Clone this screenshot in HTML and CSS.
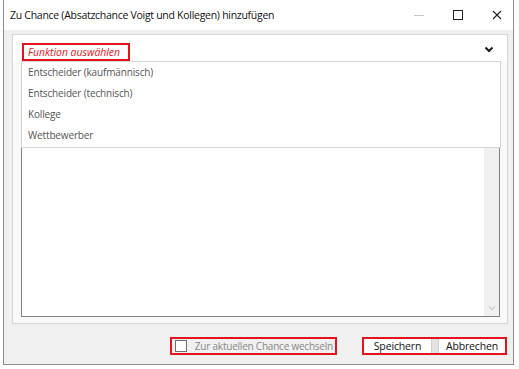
FILE: index.html
```html
<!DOCTYPE html>
<html lang="de">

    <head>
        <meta charset="UTF-8">
        <meta name="viewport" content="width=device-width, initial-scale=1.0">
        <title>Zu Chance hinzufügen</title>
        <link rel="stylesheet" href="styles.css">
    </head>

    <body>
        <div class="window">
            <div class="titlebar">
                <span class="title">Zu Chance (Absatzchance Voigt und Kollegen) hinzufügen</span>
                <div class="win-controls">
                    <span class="ctrl ctrl-min">
                        <svg width="10" height="10" viewBox="0 0 10 10"><path d="M0 5.5h10" stroke="#c4c4c4" stroke-width="1"/></svg>
                    </span>
                    <span class="ctrl">
                        <svg width="10" height="10" viewBox="0 0 10 10"><rect x="0.5" y="0.5" width="9" height="9" fill="none" stroke="#222" stroke-width="1"/></svg>
                    </span>
                    <span class="ctrl">
                        <svg width="10" height="10" viewBox="0 0 10 10"><path d="M1 1l8 8M9 1l-8 8" stroke="#222" stroke-width="1.1"/></svg>
                    </span>
                </div>
            </div>

            <div class="content">
                <div class="panel">
                    <div class="combo">
                        <span class="placeholder mark">Funktion auswählen</span>
                        <svg class="chevron" width="10" height="7" viewBox="0 0 10 7"><path d="M1.5 1.5l3.5 3.5 3.5-3.5" fill="none" stroke="#1a1a1a" stroke-width="2"/></svg>
                    </div>

                    <div class="editor">
                        <div class="scrollbar">
                            <svg width="8" height="6" viewBox="0 0 8 6"><path d="M1 1.5l3 3 3-3" fill="none" stroke="#b8b8b8" stroke-width="1"/></svg>
                        </div>
                    </div>

                    <!-- open dropdown list of the combo box -->
                    <ul class="dropdown">
                        <li>Entscheider (kaufmännisch)</li>
                        <li>Entscheider (technisch)</li>
                        <li>Kollege</li>
                        <li>Wettbewerber</li>
                    </ul>
                </div>

                <div class="footer">
                    <label class="switch mark">
                        <span class="checkbox"></span>
                        Zur aktuellen Chance wechseln
                    </label>
                    <div class="buttons mark">
                        <button class="btn btn-save">Speichern</button>
                        <span class="btn-sep"></span>
                        <button class="btn btn-cancel">Abbrechen</button>
                    </div>
                </div>
            </div>
        </div>
    </body>

</html>
```

FILE: styles.css
```css
body {
    margin: 0;
    background: #ffffff;
    font-family: 'Open Sans', 'Noto Sans', Arial, sans-serif;
    font-size: 10px;
    letter-spacing: -0.15px;
    color: #1a1a1a;
}

.window {
    box-sizing: border-box;
    width: 511px;
    height: 365px;
    margin-left: 3px;
    border: 1px solid #8c8c8c;
    border-top: none;
    display: flex;
    flex-direction: column;
}

.titlebar {
    height: 30px;
    flex-shrink: 0;
    display: flex;
    align-items: center;
    padding-left: 6px;
    background: #ffffff;
}

.title {
    font-size: 10.5px;
    letter-spacing: -0.28px;
    color: #111;
}

.win-controls {
    margin-left: auto;
    display: flex;
    gap: 19px;
    padding-right: 6px;
}

.ctrl {
    width: 20px;
    height: 12px;
    display: flex;
    align-items: center;
    justify-content: center;
}

.content {
    flex: 1;
    background: #f0f0f0;
    padding: 4px 5px 0 8px;
    display: flex;
    flex-direction: column;
}

.panel {
    position: relative;
    box-sizing: border-box;
    height: 290px;
    border: 1px solid #d6d6d6;
    background: #f9f9f9;
    padding: 0 7px 6px 8px;
    display: flex;
    flex-direction: column;
}

.combo {
    height: 26px;
    flex-shrink: 0;
    display: flex;
    align-items: flex-end;
    background: #ffffff;
    margin: 0 -7px 0 -8px;
    padding: 0 7px 0 8px;
}

.mark {
    border: 2px solid #e3141c;
    box-sizing: border-box;
}

.placeholder {
    height: 18px;
    margin-left: 1px;
    padding: 0 8px 0 4px;
    font-size: 10.4px;
    line-height: 14px;
    letter-spacing: 0;
    color: #e3141c;
    font-style: italic;
}

.chevron {
    margin-left: auto;
    margin-right: 6px;
    align-self: center;
    margin-top: 3px;
}

.editor {
    flex: 1;
    background: #ffffff;
    border: 1px solid #808080;
    display: flex;
    justify-content: flex-end;
}

.scrollbar {
    width: 15px;
    background: #f0f0f0;
    display: flex;
    align-items: flex-end;
    justify-content: center;
    padding-bottom: 5px;
    box-sizing: border-box;
}

.dropdown {
    position: absolute;
    left: 8px;
    top: 26px;
    width: 480px;
    box-sizing: border-box;
    margin: 0;
    padding: 0 0 1px;
    list-style: none;
    background: #ffffff;
    border: 1px solid #d4d4d4;
}

.dropdown li {
    height: 21px;
    line-height: 21px;
    padding-left: 6px;
    color: #555555;
}

.footer {
    flex: 1;
    display: flex;
    justify-content: flex-end;
    align-items: flex-start;
    gap: 25px;
    padding: 13px 1px 0 0;
}

.switch {
    height: 18px;
    display: flex;
    align-items: center;
    padding: 0 2px 0 3px;
    letter-spacing: -0.22px;
    color: #888888;
}

.checkbox {
    width: 12px;
    height: 12px;
    box-sizing: border-box;
    border: 1px solid #6e6e6e;
    background: #ffffff;
    margin-right: 8px;
}

.buttons {
    width: 145px;
    height: 18px;
    display: flex;
    background: #ffffff;
}

.btn {
    font-family: inherit;
    font-size: 10.5px;
    letter-spacing: -0.15px;
    color: #111;
    background: #ffffff;
    border: none;
    padding: 0;
    height: 14px;
    line-height: 14px;
}

.btn-save {
    width: 67px;
}

.btn-sep {
    width: 8px;
    background: #e3e3e3;
    border-left: 1px solid #cfcfcf;
    border-right: 1px solid #cfcfcf;
    box-sizing: border-box;
}

.btn-cancel {
    flex: 1;
}
```
